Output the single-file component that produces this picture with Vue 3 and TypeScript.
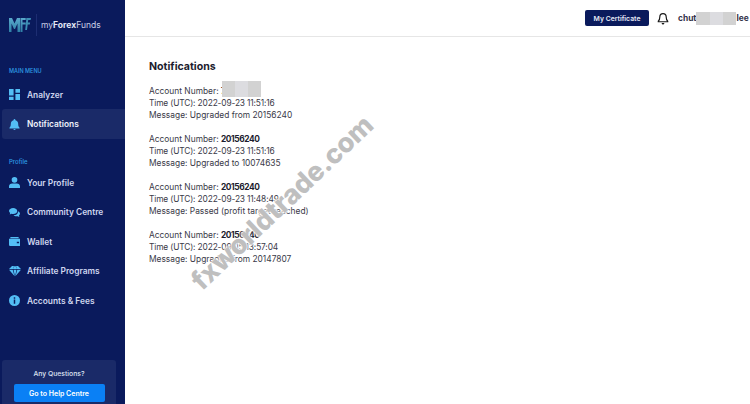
<script setup lang="ts">
interface Note { account: string; time: string; message: string; hidden?: boolean }
const notes: Note[] = [
  { account: '7', time: '2022-09-23 11:51:16', message: 'Upgraded from 20156240', hidden: true },
  { account: '20156240', time: '2022-09-23 11:51:16', message: 'Upgraded to 10074635' },
  { account: '20156240', time: '2022-09-23 11:48:49', message: 'Passed (profit target reached)' },
  { account: '20156240', time: '2022-09-15 13:57:04', message: 'Upgraded from 20147807' },
]
const menu = [
  { label: 'Your Profile', icon: 'user' },
  { label: 'Community Centre', icon: 'chat' },
  { label: 'Wallet', icon: 'wallet' },
  { label: 'Affiliate Programs', icon: 'gem' },
  { label: 'Accounts & Fees', icon: 'info' },
]
</script>

<template>
  <div class="app">
    <aside class="side">
      <div class="brand">
        <svg class="logo" viewBox="0 0 22 16" width="22" height="16">
          <defs>
            <linearGradient id="lg" x1="0" y1="0" x2="0" y2="1">
              <stop offset="0" stop-color="#5aa9cc" />
              <stop offset="1" stop-color="#2f7fa6" />
            </linearGradient>
          </defs>
          <path fill="url(#lg)" d="M0 1h3l2.500 5.500L8 1h3v14H8.500V6.500L6 12H5L2.500 6.500V15H0z" />
          <path fill="url(#lg)" d="M11.500 1h5.200v2h-3.200v2.600h2.700v1.900h-2.700V15h-2z" />
          <path fill="#3d8fb5" d="M17.300 1H22l-.4 2h-2.400l-.3 2.600h2.200l-.3 1.900h-2.100l-.7 5.500h-1.800l.6-5.500h-.7l.2-1.900h.7z" />
        </svg>
        <span class="brand-rule"></span>
        <span class="brand-name">my<b>Forex</b>Funds</span>
      </div>

      <div class="group-label first">MAIN MENU</div>
      <a class="item">
        <svg class="ico" viewBox="0 0 12 12"><path fill="#53bdf5" d="M0 0h5v7H0zM7 0h5v4H7zM0 8.500h5V12H0zM7 5.500h5V12H7z" /></svg>
        <span>Analyzer</span>
      </a>
      <a class="item active">
        <svg class="ico" viewBox="0 0 12 12"><path fill="#53bdf5" d="M6 0c.6 0 1 .4 1 1v.4c1.800.4 3 2 3 3.800 0 2.500.6 3.500 1.500 4.300v.8H.5v-.8C1.400 8.700 2 7.700 2 5.200c0-1.800 1.200-3.400 3-3.800V1c0-.6.400-1 1-1zM4.700 11h2.600c-.2.600-.7 1-1.300 1s-1.100-.4-1.300-1z" /></svg>
        <span>Notifications</span>
      </a>

      <div class="group-label second">Profile</div>
      <a v-for="m in menu" :key="m.label" class="item">
        <svg class="ico" :class="{ wide: m.icon === 'gem' }" viewBox="0 0 12 12">
          <path v-if="m.icon === 'user'" fill="#53bdf5" d="M6 0a3 3 0 1 1 0 6.200A3 3 0 0 1 6 0zM3.500 7h5C10.500 7 12 8.300 12 10v2H0v-2c0-1.700 1.500-3 3.500-3z" />
          <path v-else-if="m.icon === 'chat'" fill="#53bdf5" d="M4.500 1C7 1 9 2.500 9 4.300S7 7.600 4.500 7.600c-.6 0-1.200-.1-1.700-.3L.8 8.300l.5-1.800C.5 5.900 0 5.100 0 4.300 0 2.500 2 1 4.500 1zM9.800 4.500c1.300.5 2.200 1.500 2.200 2.700 0 .8-.4 1.500-1.100 2l.4 1.800-1.900-1c-.4.100-.9.200-1.400.2-1.300 0-2.400-.5-3-1.200 3 0 5-1.900 4.800-4.500z" />
          <path v-else-if="m.icon === 'wallet'" fill="#53bdf5" fill-rule="evenodd" d="M1.500 1h9v1.500h-9zM0 3h12v8H1.500C.7 11 0 10.300 0 9.500zM8.500 6.300v1.500H11V6.300z" />
          <path v-else-if="m.icon === 'gem'" fill="#53bdf5" d="M3 1h2l-1 3H0zM5.500 1h1L8 4H4zM7 1h2l3 3H8zM0 4.800h3.700L5.500 11zM4.500 4.800h3L6 11.500zM8.300 4.800H12L6.500 11z" />
          <template v-else>
            <circle cx="6" cy="6" r="6" fill="#53bdf5" />
            <path fill="#0a1a5c" d="M5.200 2.500h1.600v1.600H5.200zM5.200 5h1.600v4.500H5.200z" />
          </template>
        </svg>
        <span>{{ m.label }}</span>
      </a>

      <div class="help">
        <div class="help-q">Any Questions?</div>
        <button class="help-btn">Go to Help Centre</button>
      </div>
    </aside>

    <div class="main">
      <header class="top">
        <button class="cert">My Certificate</button>
        <svg class="bell" viewBox="0 0 14 14" width="12" height="13">
          <path fill="none" stroke="#1a1a1a" stroke-width="1.400" d="M7 1.200c2.300 0 3.700 1.800 3.700 3.800 0 3 .7 4.200 1.800 5.200v.6h-11v-.6C2.600 9.200 3.300 8 3.300 5c0-2 1.400-3.800 3.700-3.800z" />
          <path fill="#1a1a1a" d="M5.300 12.200h3.400C8.500 13.200 7.800 14 7 14s-1.500-.8-1.700-1.800z" />
        </svg>
        <div class="user">
          <span>chut</span>
          <span class="user-mask"><i></i><i class="light"></i><i></i></span>
          <span>lee</span>
        </div>
      </header>

      <main class="content">
        <h1>Notifications</h1>
        <div v-for="(n, i) in notes" :key="i" class="note">
          <div class="line">
            Account Number: <b>{{ n.account }}</b>
            <span v-if="n.hidden" class="mask"><i></i><i class="light"></i><i></i></span>
          </div>
          <div class="time">Time (UTC): {{ n.time }}</div>
          <div>Message: {{ n.message }}</div>
        </div>
      </main>

      <div class="mark">fxworldtrade.com</div>
    </div>
  </div>
</template>

<style>
html, body { margin: 0; background: #fff; }
</style>

<style scoped>
.app {
  display: flex;
  width: 750px;
  height: 404px;
  overflow: hidden;
  font-family: Inter, "Noto Sans", sans-serif;
  background: #fff;
}
.side {
  width: 125px;
  flex: none;
  background: #0a1a5c;
  display: flex;
  flex-direction: column;
  color: #d5dbf2;
}
.brand {
  display: flex;
  align-items: center;
  height: 24px;
  margin: 13px 0 0 9px;
}
.logo { flex: none; }
.brand-rule {
  width: 1px;
  height: 22px;
  margin: 0 4px 0 5px;
  background: #1d2d72;
}
.brand-name {
  font-size: 8.500px;
  color: #c9cfe6;
  white-space: nowrap;
}
.brand-name b { font-weight: 700; color: #e4e8f6; }
.group-label {
  margin-left: 9px;
  font-size: 5.500px;
  line-height: 8px;
  color: #2f9fe8;
  font-weight: 500;
}
.group-label.first { margin-top: 30px; margin-bottom: 5px; }
.group-label.second { margin-top: 19px; margin-bottom: 2.500px; font-size: 6px; }
.item {
  display: flex;
  align-items: center;
  gap: 7px;
  height: 29.400px;
  padding-left: 9px;
  font-size: 8.400px;
  font-weight: 600;
  color: #cfd6ef;
  white-space: nowrap;
}
.item.active {
  margin-left: 2px;
  padding-left: 7px;
  background: #1a2a68;
  border-radius: 3px 0 0 3px;
  color: #eef1fb;
}
.ico { width: 11px; height: 11px; flex: none; }
.ico.wide { width: 12px; height: 12px; margin-right: -1px; }
.help {
  margin: auto 9px 0 2px;
  height: 44px;
  background: #1a2a68;
  border-radius: 3px 3px 0 0;
  display: flex;
  flex-direction: column;
  align-items: center;
  box-sizing: border-box;
}
.help-q {
  font-size: 6.800px;
  line-height: 9px;
  margin-top: 9px;
  color: #dfe3f3;
  font-weight: 500;
}
.help-btn {
  width: 91px;
  height: 18px;
  margin-top: 6px;
  border: 0;
  border-radius: 2px;
  background: #0a80f5;
  color: #fff;
  font: 600 7px Inter, "Noto Sans", sans-serif;
  padding: 0;
}
.main {
  flex: 1;
  min-width: 0;
  position: relative;
  display: flex;
  flex-direction: column;
}
.top {
  height: 36px;
  flex: none;
  border-bottom: 1px solid #e6e6e6;
  display: flex;
  align-items: center;
  padding-left: 460px;
  box-sizing: content-box;
}
.cert {
  width: 64px;
  height: 16px;
  border: 0;
  border-radius: 2px;
  background: #0a1a5c;
  color: #e6e9f6;
  font: 600 6.800px Inter, "Noto Sans", sans-serif;
  padding: 0;
  flex: none;
}
.bell { margin-left: 8px; flex: none; }
.user {
  margin-left: 9px;
  display: flex;
  align-items: center;
  font-size: 8.400px;
  font-weight: 700;
  color: #33334a;
  white-space: nowrap;
}
.user-mask, .mask {
  display: inline-flex;
  height: 13px;
}
.user-mask { width: 40px; }
.user-mask i, .mask i { flex: 1; background: #d2d2d2; }
.user-mask i.light, .mask i.light { background: #dcdce0; }
.content {
  padding: 0 0 0 24px;
  font-size: 8.400px;
  line-height: 12px;
  color: #3a3a48;
}
h1 {
  margin: 23px 0 11px;
  font-size: 10.600px;
  line-height: 14px;
  font-weight: 700;
  color: #1c1c2e;
}
.note { margin-bottom: 12px; white-space: nowrap; }
.note b { font-weight: 700; color: #1c1c2e; letter-spacing: -.4px; }
.time { letter-spacing: -.15px; }
.line { position: relative; }
.mask {
  position: absolute;
  left: 73px;
  top: -4px;
  width: 39px;
  height: 16px;
}
.mark {
  position: absolute;
  left: 17px;
  top: 186px;
  width: 280px;
  text-align: center;
  transform: rotate(-43.500deg);
  font: 800 27px Inter, "Noto Sans", sans-serif;
  letter-spacing: -.2px;
  color: #bfbfbf;
  text-shadow: 0 0 2px #fff, 0 0 2px #fff, 0 0 3px #fff;
  white-space: nowrap;
}
</style>
